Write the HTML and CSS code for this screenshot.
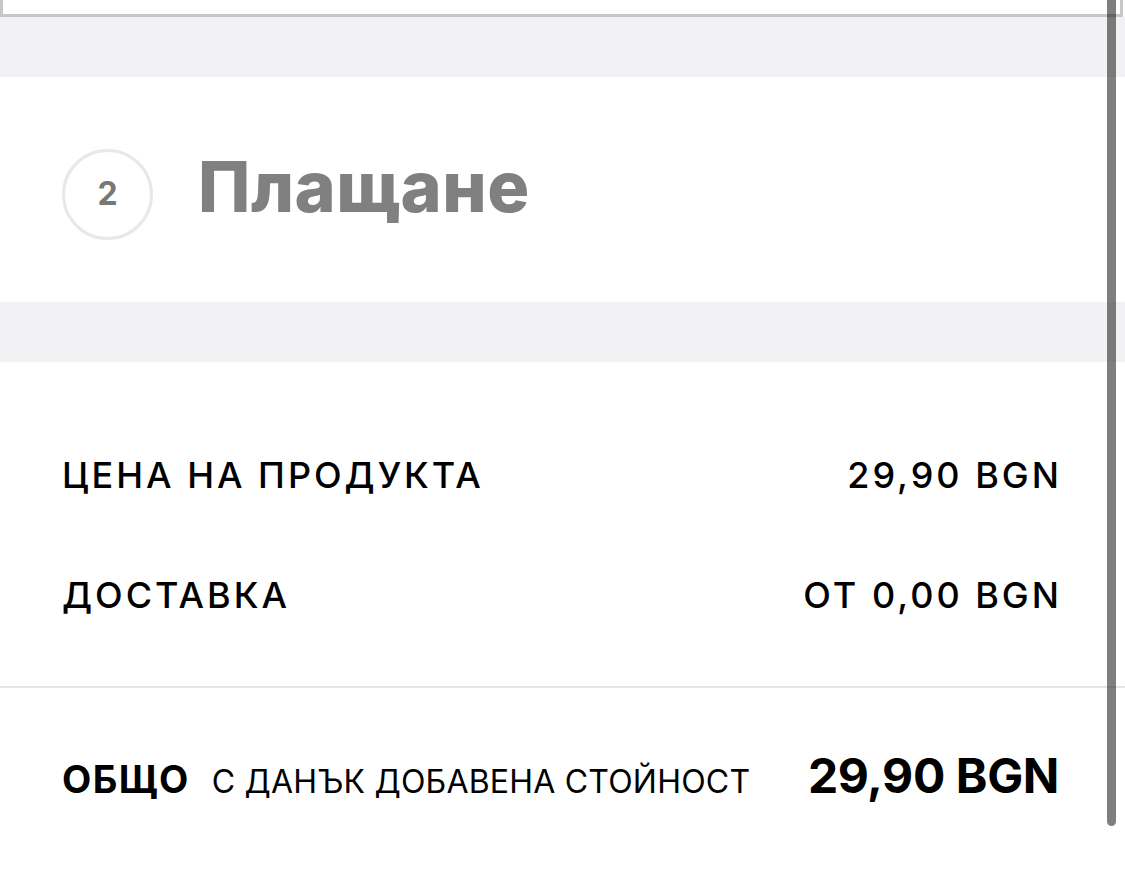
FILE: index.html
```html
<!DOCTYPE html>
<html lang="bg">
<head>
<meta charset="utf-8">
<title>Плащане</title>
<link rel="stylesheet" href="styles.css">
</head>
<body>
<div class="page">
  <div class="prev-box"></div>
  <div class="band"></div>
  <section class="step">
    <div class="step-num">2</div>
    <h2 class="step-title">Плащане</h2>
  </section>
  <div class="band"></div>
  <section class="summary">
    <div class="rows">
      <div class="row">
        <span class="label">ЦЕНА НА ПРОДУКТА</span>
        <span class="value">29,90 BGN</span>
      </div>
      <div class="row">
        <span class="label">ДОСТАВКА</span>
        <span class="value">ОТ 0,00 BGN</span>
      </div>
    </div>
    <div class="total">
      <div class="total-label">
        <span class="total-word">ОБЩО</span>
        <span class="vat">С ДАНЪК ДОБАВЕНА СТОЙНОСТ</span>
      </div>
      <span class="total-value">29,90 BGN</span>
    </div>
  </section>
  <div class="scrollbar"></div>
</div>
</body>
</html>
```
FILE: styles.css
```css
* { box-sizing: border-box; }

html, body {
  margin: 0;
  padding: 0;
  background: #ffffff;
}

body {
  font-family: Inter, "Noto Sans", "DejaVu Sans", sans-serif;
  color: #000000;
  overflow: hidden;
}

.page {
  position: relative;
  width: 1125px;
  height: 886px;
}

.prev-box {
  height: 17px;
  margin-right: 2px;
  border: 3px solid #c7c7c7;
  border-top: none;
  background: #ffffff;
}

.band {
  height: 60px;
  background: #f2f2f4;
}

.step {
  display: flex;
  align-items: center;
  gap: 45px;
  height: 225px;
  padding: 72px 62px 63px;
}

.step-num {
  width: 91px;
  height: 91px;
  flex: none;
  border: 3px solid #e8e8e8;
  border-radius: 50%;
  display: flex;
  align-items: center;
  justify-content: center;
  padding-bottom: 2px;
  font-size: 32px;
  font-weight: 700;
  color: #787878;
}

.step-title {
  margin: 0;
  padding-bottom: 15px;
  font-size: 70px;
  line-height: 90px;
  font-weight: 800;
  color: #808080;
  letter-spacing: 0.5px;
}

.summary {
  padding-top: 93px;
}

.rows {
  display: flex;
  flex-direction: column;
  gap: 80px;
  padding: 0 63px 0 62px;
}

.row {
  display: flex;
  justify-content: space-between;
  font-size: 36px;
  line-height: 40px;
  font-weight: 500;
  letter-spacing: 3px;
}

.total {
  margin-top: 71px;
  border-top: 2px solid #e6e6e6;
  padding: 60px 66px 0 62px;
  display: flex;
  justify-content: space-between;
  align-items: baseline;
}

.total-label {
  display: flex;
  align-items: baseline;
  gap: 22px;
}

.total-word {
  font-size: 38px;
  font-weight: 700;
  letter-spacing: 1.5px;
}

.vat {
  font-size: 32px;
  font-weight: 400;
  letter-spacing: 0.2px;
}

.total-value {
  font-size: 48px;
  line-height: 56px;
  font-weight: 700;
  letter-spacing: -0.4px;
}

.scrollbar {
  position: absolute;
  top: 0;
  left: 1107px;
  width: 9px;
  height: 826px;
  border-radius: 0 0 5px 5px;
  background: rgba(0, 0, 0, 0.5);
}
```
